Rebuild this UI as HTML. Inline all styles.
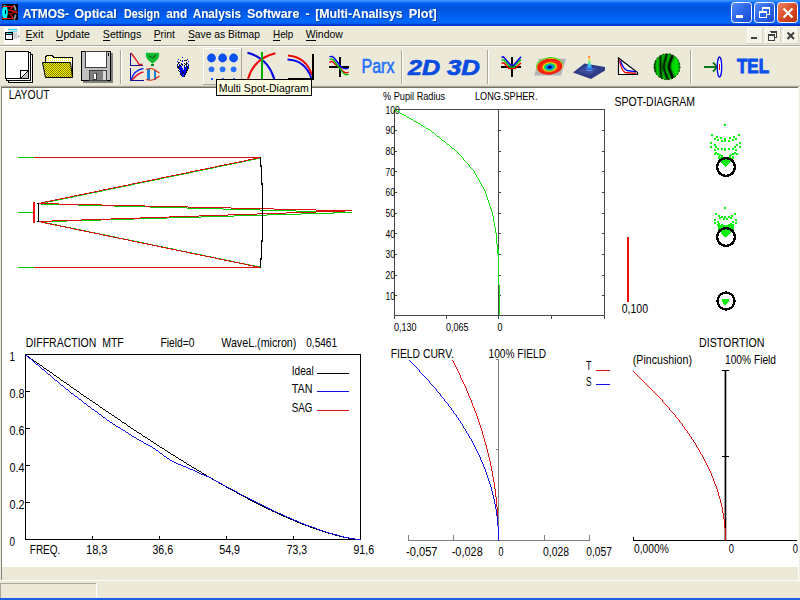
<!DOCTYPE html>
<html><head><meta charset="utf-8"><title>ATMOS- Optical Design and Analysis Software - [Multi-Analisys Plot]</title>
<style>
html,body{margin:0;padding:0;background:#ECE9D8;overflow:hidden}
svg{display:block;font-family:"Liberation Sans",Arial,sans-serif}
text{white-space:pre}
.c{shape-rendering:crispEdges}
</style></head><body>
<svg width="800" height="600" viewBox="0 0 800 600">
<defs>
<linearGradient id="tb" x1="0" y1="0" x2="0" y2="1">
<stop offset="0" stop-color="#3F96FF"/><stop offset="0.06" stop-color="#2D83FA"/><stop offset="0.10" stop-color="#0869F7"/>
<stop offset="0.15" stop-color="#005FF0"/><stop offset="0.22" stop-color="#0056E4"/><stop offset="0.40" stop-color="#0055E2"/>
<stop offset="0.55" stop-color="#005BEC"/><stop offset="0.70" stop-color="#0064F8"/><stop offset="0.86" stop-color="#0068FE"/>
<stop offset="0.91" stop-color="#0058E8"/><stop offset="0.95" stop-color="#0038D0"/><stop offset="1" stop-color="#002FC2"/>
</linearGradient>
<linearGradient id="bb" x1="0" y1="0" x2="1" y2="1"><stop offset="0" stop-color="#5A8EFA"/><stop offset="0.45" stop-color="#2E68EC"/><stop offset="1" stop-color="#1A48CC"/></linearGradient>
<linearGradient id="rb" x1="0" y1="0" x2="1" y2="1"><stop offset="0" stop-color="#EC8A6E"/><stop offset="0.5" stop-color="#DA4B25"/><stop offset="1" stop-color="#B93411"/></linearGradient>
<pattern id="dy" width="2" height="2" patternUnits="userSpaceOnUse"><rect width="2" height="2" fill="#FFFF00"/><rect width="1" height="1" fill="#808000"/><rect x="1" y="1" width="1" height="1" fill="#808000"/></pattern>
<pattern id="ly" width="2" height="2" patternUnits="userSpaceOnUse"><rect width="2" height="2" fill="#FFFFFF"/><rect width="1" height="1" fill="#FFFF00"/></pattern>
<radialGradient id="wf" cx="0.5" cy="0.55" r="0.5" fx="0.5" fy="0.58"><stop offset="0" stop-color="#000010"/><stop offset="0.12" stop-color="#0010B0"/><stop offset="0.26" stop-color="#00A0F0"/><stop offset="0.38" stop-color="#10D840"/><stop offset="0.48" stop-color="#E8E010"/><stop offset="0.58" stop-color="#FF3808"/><stop offset="0.88" stop-color="#F01410"/><stop offset="0.95" stop-color="#E8C818"/><stop offset="1" stop-color="#30D830"/></radialGradient>
<linearGradient id="pk" x1="0" y1="0" x2="0" y2="1"><stop offset="0" stop-color="#FF5040"/><stop offset="0.2" stop-color="#FFE040"/><stop offset="0.45" stop-color="#60F080"/><stop offset="0.7" stop-color="#40C0FF"/><stop offset="1" stop-color="#3050D0"/></linearGradient>
<filter id="ts" x="-2%" y="-20%" width="104%" height="150%"><feDropShadow dx="1" dy="0.8" stdDeviation="0" flood-color="#0A1F6C" flood-opacity="0.55"/></filter><clipPath id="ifc"><circle cx="667" cy="66.7" r="12.8"/></clipPath><filter id="bl" x="-20%" y="-20%" width="140%" height="140%"><feGaussianBlur stdDeviation="0.8"/></filter>
</defs>

<rect width="800" height="600" fill="#ECE9D8"/>
<rect class="c" x="0" y="0" width="800" height="26" fill="url(#tb)"/>
<rect class="c" x="0" y="26" width="800" height="1" fill="#F8F2DE"/>
<g><rect class="c" x="2" y="4" width="16" height="16" fill="#000"/><ellipse cx="4.9" cy="12.3" rx="2.9" ry="7.2" fill="#00F4F8"/><rect class="c" x="5" y="10" width="1" height="4" fill="#000"/><path d="M2.2 6.5H13L10.5 8.8M8.3 13.8H13M10.5 15L12.5 17M2.2 18.5H12.5V17" stroke="#F01010" stroke-width="1.1" fill="none"/><path d="M8.3 10L12 10.8L15 12L17.8 12.5" stroke="#F01010" stroke-width="1.5" fill="none"/><path d="M13.8 5.2Q15.6 8 15.6 10.5M15.6 14.5Q15.6 17 13.8 19.6" stroke="#9A9A9A" stroke-width="1.8" fill="none"/></g>
<text y="17.5" font-size="13" font-weight="bold" fill="#fff" filter="url(#ts)"><tspan x="22.75" textLength="46.25" lengthAdjust="spacingAndGlyphs">ATMOS-</tspan> <tspan x="74.2" textLength="42.6" lengthAdjust="spacingAndGlyphs">Optical</tspan> <tspan x="124" textLength="35.7" lengthAdjust="spacingAndGlyphs">Design</tspan> <tspan x="166.3" textLength="20.7" lengthAdjust="spacingAndGlyphs">and</tspan> <tspan x="192.7" textLength="48.3" lengthAdjust="spacingAndGlyphs">Analysis</tspan> <tspan x="247" textLength="52.3" lengthAdjust="spacingAndGlyphs">Software</tspan> <tspan x="305.6" textLength="4.15" lengthAdjust="spacingAndGlyphs">-</tspan> <tspan x="315.25" textLength="87.45" lengthAdjust="spacingAndGlyphs">[Multi-Analisys</tspan> <tspan x="408.75" textLength="28.05" lengthAdjust="spacingAndGlyphs">Plot]</tspan></text>
<rect x="731.5" y="2.5" width="20" height="20" rx="3" ry="3" fill="url(#bb)" stroke="#fff" stroke-width="1"/>
<rect x="754.5" y="2.5" width="20" height="20" rx="3" ry="3" fill="url(#bb)" stroke="#fff" stroke-width="1"/>
<rect x="777.5" y="2.5" width="20" height="20" rx="3" ry="3" fill="url(#rb)" stroke="#fff" stroke-width="1"/>
<rect class="c" x="736" y="15" width="7" height="3" fill="#fff"/>
<g class="c" fill="#fff"><rect x="762" y="7" width="8" height="2"/><rect x="769" y="7" width="1" height="8"/><rect x="762" y="7" width="1" height="4"/><rect x="767" y="14" width="3" height="1"/><rect x="759" y="11" width="8" height="2"/><rect x="759" y="11" width="1" height="7"/><rect x="766" y="11" width="1" height="7"/><rect x="759" y="17" width="8" height="1"/></g>
<path d="M783.5 8.5L792.5 17.5M792.5 8.5L783.5 17.5" stroke="#fff" stroke-width="2.2" fill="none"/>
<rect class="c" x="0" y="45" width="800" height="1" fill="#ACA899"/><rect class="c" x="0" y="46" width="800" height="1" fill="#fff"/>
<rect class="c" x="4" y="27" width="16" height="17" fill="#fff"/>
<g class="c"><rect x="8" y="28" width="10" height="10" fill="#E4E6EA"/><rect x="8" y="29" width="9" height="1" fill="#30E0F0"/><rect x="10" y="31" width="7" height="1" fill="#60E8F4"/><rect x="13" y="33" width="4" height="6" fill="#D0D2D6"/><rect x="5.5" y="32.5" width="7" height="7" fill="#fff" stroke="#000"/><rect x="5" y="32" width="8" height="1" fill="#000"/><rect x="6" y="33" width="6" height="1" fill="#30D8F0"/><rect x="6" y="34" width="6" height="1" fill="#000"/><path d="M18 35L20 36.5L18 38Z" fill="#A0A0A0" shape-rendering="auto"/></g>
<text x="25.4" y="38" font-size="11" fill="#000" textLength="18.0" lengthAdjust="spacingAndGlyphs" >Exit</text>
<text x="55.8" y="38" font-size="11" fill="#000" textLength="34.2" lengthAdjust="spacingAndGlyphs" >Update</text>
<text x="102.8" y="38" font-size="11" fill="#000" textLength="38.5" lengthAdjust="spacingAndGlyphs" >Settings</text>
<text x="153.7" y="38" font-size="11" fill="#000" textLength="21.3" lengthAdjust="spacingAndGlyphs" >Print</text>
<text x="188" y="38" font-size="11" fill="#000" textLength="72" lengthAdjust="spacingAndGlyphs" >Save as Bitmap</text>
<text x="273" y="38" font-size="11" fill="#000" textLength="20.3" lengthAdjust="spacingAndGlyphs" >Help</text>
<text x="305.7" y="38" font-size="11" fill="#000" textLength="37.1" lengthAdjust="spacingAndGlyphs" >Window</text>
<rect class="c" x="25.5" y="40" width="6" height="1" fill="#000"/>
<rect class="c" x="56" y="40" width="7" height="1" fill="#000"/>
<rect class="c" x="103" y="40" width="6.5" height="1" fill="#000"/>
<rect class="c" x="154" y="40" width="6.5" height="1" fill="#000"/>
<rect class="c" x="188" y="40" width="6.5" height="1" fill="#000"/>
<rect class="c" x="273" y="40" width="7" height="1" fill="#000"/>
<rect class="c" x="306" y="40" width="10" height="1" fill="#000"/>
<rect class="c" x="747" y="28" width="16" height="16" fill="#F4F3EA"/><rect class="c" x="747" y="28" width="16" height="1" fill="#fff"/><rect class="c" x="747" y="28" width="1" height="16" fill="#fff"/><rect class="c" x="762" y="28" width="1" height="16" fill="#D8D4C4"/><rect class="c" x="747" y="43" width="16" height="1" fill="#D8D4C4"/>
<rect class="c" x="765" y="28" width="16" height="16" fill="#F4F3EA"/><rect class="c" x="765" y="28" width="16" height="1" fill="#fff"/><rect class="c" x="765" y="28" width="1" height="16" fill="#fff"/><rect class="c" x="780" y="28" width="1" height="16" fill="#D8D4C4"/><rect class="c" x="765" y="43" width="16" height="1" fill="#D8D4C4"/>
<rect class="c" x="783" y="28" width="16" height="16" fill="#F4F3EA"/><rect class="c" x="783" y="28" width="16" height="1" fill="#fff"/><rect class="c" x="783" y="28" width="1" height="16" fill="#fff"/><rect class="c" x="798" y="28" width="1" height="16" fill="#D8D4C4"/><rect class="c" x="783" y="43" width="16" height="1" fill="#D8D4C4"/>
<rect class="c" x="751" y="37" width="6" height="2" fill="#404040"/>
<g class="c" fill="none" stroke="#404040"><path d="M770.5 32.5H776.5V37.5H775" /><path d="M770 31.5H777"/><rect x="768.5" y="35.5" width="6" height="5"/><path d="M768 34.5H775"/></g>
<path d="M787.5 32.5L794 39M794 32.5L787.5 39" stroke="#404040" stroke-width="2" fill="none"/>
<rect class="c" x="120" y="50" width="1" height="34" fill="#ACA899"/><rect class="c" x="121" y="50" width="1" height="34" fill="#fff"/>
<rect class="c" x="401" y="50" width="1" height="34" fill="#ACA899"/><rect class="c" x="402" y="50" width="1" height="34" fill="#fff"/>
<rect class="c" x="487" y="50" width="1" height="34" fill="#ACA899"/><rect class="c" x="488" y="50" width="1" height="34" fill="#fff"/>
<rect class="c" x="690" y="50" width="1" height="34" fill="#ACA899"/><rect class="c" x="691" y="50" width="1" height="34" fill="#fff"/>
<rect class="c" x="0" y="85" width="800" height="2" fill="#E0DCCB"/>
<g class="c"><rect x="8.5" y="54.5" width="24" height="28" fill="#fff" stroke="#000"/><rect x="6.5" y="52.5" width="24" height="28" fill="#fff" stroke="#000"/><rect x="5.5" y="51.5" width="23" height="27" fill="#fff" stroke="#000"/><path d="M20.5 78V70.5H28" fill="none" stroke="#000"/><path d="M28 71V78H21Z" fill="#C0C0C0" shape-rendering="auto"/><path d="M21 78L28 71" stroke="#000" shape-rendering="auto"/></g>
<g class="c"><path d="M45.5 62V57L47 55.5H52L53.5 57H72.5V77" fill="url(#ly)" stroke="#000"/><path d="M42.5 62.5H70.5L72.5 77.5H45.5Z" fill="url(#dy)" stroke="#000" shape-rendering="auto"/></g>
<g class="c"><rect x="83" y="53" width="30" height="30" fill="#808080"/><rect x="81.5" y="51.5" width="29" height="29" fill="#C0C0C0" stroke="#000"/><rect x="86" y="52" width="20" height="15" fill="#fff"/><rect x="85.5" y="51.5" width="21" height="16" fill="none" stroke="#404040"/><rect x="90" y="71" width="13" height="10" fill="#808080"/><rect x="89.5" y="70.5" width="17" height="10" fill="none" stroke="#404040"/><rect x="93" y="73" width="3" height="6" fill="#fff" stroke="#000" stroke-width="0.6"/><rect x="103" y="71" width="3" height="9" fill="#D8D8D8"/><rect x="107.5" y="53" width="1" height="3" fill="#000"/></g>
<g fill="none" stroke-width="1.3"><path class="c" d="M130.5 53V65.5H143" stroke="#1010A0"/><path d="M131 53L137 61L139 64.5H142.5" stroke="#E01010"/><path class="c" d="M130.5 68V80.5H144" stroke="#1010A0"/><path d="M131 80Q134 70 143.5 68.5" stroke="#1030F0" stroke-width="1.5"/><path d="M132 80Q138 73 143.5 72" stroke="#E01030" stroke-width="1.5"/><path d="M146.5 53.5H158.5Q158.8 58 155.5 60.5L152.5 63L149.5 60.5Q146.2 58 146.5 53.5Z" fill="#10B830" stroke="#10C030"/><path d="M149 56L153 58L156 55" stroke="#087020"/><rect class="c" x="151" y="64" width="3" height="2" fill="#108020" stroke="none"/><rect class="c" x="146.5" y="69" width="3.5" height="11" fill="#1880D8" stroke="none"/><rect class="c" x="153.5" y="69.5" width="2.2" height="10" fill="#1880D8" stroke="none"/><path d="M146 69.5Q150 67.5 154 69.5Q158 72 159.5 73M146 79.5Q150 81 154 79.5Q158 77 159.5 76" stroke="#E03010" stroke-width="1.1"/></g>
<g class="c"><rect x="182" y="57" width="1" height="1" fill="#0000F8"/><rect x="178" y="59" width="1" height="1" fill="#0000F8"/><rect x="187" y="59" width="1" height="1" fill="#0000F8"/><rect x="180" y="60" width="1" height="1" fill="#101018"/><rect x="182" y="60" width="1" height="1" fill="#0000F8"/><rect x="184" y="60" width="1" height="1" fill="#101018"/><rect x="185" y="60" width="1" height="1" fill="#101018"/><rect x="186" y="60" width="1" height="1" fill="#101018"/><rect x="177" y="61" width="1" height="1" fill="#0000F8"/><rect x="182" y="61" width="1" height="1" fill="#0000F8"/><rect x="188" y="61" width="1" height="1" fill="#0000F8"/><rect x="178" y="62" width="1" height="1" fill="#101018"/><rect x="179" y="62" width="1" height="1" fill="#101018"/><rect x="186" y="62" width="1" height="1" fill="#101018"/><rect x="178" y="63" width="1" height="1" fill="#101018"/><rect x="181" y="63" width="1" height="1" fill="#0000F8"/><rect x="184" y="63" width="1" height="1" fill="#101018"/><rect x="186" y="63" width="1" height="1" fill="#101018"/><rect x="187" y="63" width="1" height="1" fill="#0000F8"/><rect x="177" y="64" width="1" height="1" fill="#101018"/><rect x="179" y="64" width="1" height="1" fill="#0000F8"/><rect x="181" y="64" width="1" height="1" fill="#101018"/><rect x="182" y="64" width="1" height="1" fill="#101018"/><rect x="185" y="64" width="1" height="1" fill="#101018"/><rect x="186" y="64" width="1" height="1" fill="#101018"/><rect x="188" y="64" width="1" height="1" fill="#0000F8"/><rect x="177" y="65" width="1" height="1" fill="#0000F8"/><rect x="179" y="65" width="1" height="1" fill="#101018"/><rect x="180" y="65" width="1" height="1" fill="#101018"/><rect x="182" y="65" width="1" height="1" fill="#0000F8"/><rect x="184" y="65" width="1" height="1" fill="#101018"/><rect x="186" y="65" width="1" height="1" fill="#0000F8"/><rect x="188" y="65" width="1" height="1" fill="#101018"/><rect x="177" y="66" width="1" height="1" fill="#0000F8"/><rect x="178" y="66" width="1" height="1" fill="#101018"/><rect x="179" y="66" width="1" height="1" fill="#101018"/><rect x="180" y="66" width="1" height="1" fill="#0000F8"/><rect x="181" y="66" width="1" height="1" fill="#0000F8"/><rect x="184" y="66" width="1" height="1" fill="#0000F8"/><rect x="186" y="66" width="1" height="1" fill="#101018"/><rect x="187" y="66" width="1" height="1" fill="#101018"/><rect x="188" y="66" width="1" height="1" fill="#0000F8"/><rect x="177" y="67" width="1" height="1" fill="#101018"/><rect x="178" y="67" width="1" height="1" fill="#101018"/><rect x="179" y="67" width="1" height="1" fill="#0000F8"/><rect x="180" y="67" width="1" height="1" fill="#0000F8"/><rect x="181" y="67" width="1" height="1" fill="#0000F8"/><rect x="184" y="67" width="1" height="1" fill="#0000F8"/><rect x="185" y="67" width="1" height="1" fill="#0000F8"/><rect x="186" y="67" width="1" height="1" fill="#0000F8"/><rect x="187" y="67" width="1" height="1" fill="#101018"/><rect x="188" y="67" width="1" height="1" fill="#0000F8"/><rect x="178" y="68" width="1" height="1" fill="#101018"/><rect x="179" y="68" width="1" height="1" fill="#0000F8"/><rect x="180" y="68" width="1" height="1" fill="#0000F8"/><rect x="181" y="68" width="1" height="1" fill="#0000F8"/><rect x="182" y="68" width="1" height="1" fill="#0000F8"/><rect x="184" y="68" width="1" height="1" fill="#0000F8"/><rect x="185" y="68" width="1" height="1" fill="#0000F8"/><rect x="186" y="68" width="1" height="1" fill="#0000F8"/><rect x="187" y="68" width="1" height="1" fill="#101018"/><rect x="188" y="68" width="1" height="1" fill="#101018"/><rect x="179" y="69" width="1" height="1" fill="#0000F8"/><rect x="180" y="69" width="1" height="1" fill="#0000F8"/><rect x="181" y="69" width="1" height="1" fill="#0000F8"/><rect x="182" y="69" width="1" height="1" fill="#0000F8"/><rect x="184" y="69" width="1" height="1" fill="#0000F8"/><rect x="185" y="69" width="1" height="1" fill="#0000F8"/><rect x="186" y="69" width="1" height="1" fill="#0000F8"/><rect x="187" y="69" width="1" height="1" fill="#101018"/><rect x="178" y="70" width="1" height="1" fill="#101018"/><rect x="180" y="70" width="1" height="1" fill="#0000F8"/><rect x="181" y="70" width="1" height="1" fill="#101018"/><rect x="182" y="70" width="1" height="1" fill="#0000F8"/><rect x="183" y="70" width="1" height="1" fill="#0000F8"/><rect x="184" y="70" width="1" height="1" fill="#0000F8"/><rect x="185" y="70" width="1" height="1" fill="#0000F8"/><rect x="186" y="70" width="1" height="1" fill="#101018"/><rect x="187" y="70" width="1" height="1" fill="#101018"/><rect x="179" y="71" width="1" height="1" fill="#101018"/><rect x="180" y="71" width="1" height="1" fill="#0000F8"/><rect x="181" y="71" width="1" height="1" fill="#0000F8"/><rect x="182" y="71" width="1" height="1" fill="#0000F8"/><rect x="183" y="71" width="1" height="1" fill="#0000F8"/><rect x="184" y="71" width="1" height="1" fill="#0000F8"/><rect x="185" y="71" width="1" height="1" fill="#0000F8"/><rect x="186" y="71" width="1" height="1" fill="#101018"/><rect x="180" y="72" width="1" height="1" fill="#0000F8"/><rect x="181" y="72" width="1" height="1" fill="#0000F8"/><rect x="182" y="72" width="1" height="1" fill="#101018"/><rect x="183" y="72" width="1" height="1" fill="#101018"/><rect x="184" y="72" width="1" height="1" fill="#0000F8"/><rect x="185" y="72" width="1" height="1" fill="#0000F8"/><rect x="186" y="72" width="1" height="1" fill="#101018"/><rect x="180" y="73" width="1" height="1" fill="#101018"/><rect x="181" y="73" width="1" height="1" fill="#0000F8"/><rect x="182" y="73" width="1" height="1" fill="#0000F8"/><rect x="183" y="73" width="1" height="1" fill="#0000F8"/><rect x="184" y="73" width="1" height="1" fill="#0000F8"/><rect x="185" y="73" width="1" height="1" fill="#101018"/><rect x="180" y="74" width="1" height="1" fill="#101018"/><rect x="181" y="74" width="1" height="1" fill="#0000F8"/><rect x="182" y="74" width="1" height="1" fill="#0000F8"/><rect x="183" y="74" width="1" height="1" fill="#0000F8"/><rect x="184" y="74" width="1" height="1" fill="#0000F8"/><rect x="185" y="74" width="1" height="1" fill="#101018"/><rect x="181" y="75" width="1" height="1" fill="#101018"/><rect x="182" y="75" width="1" height="1" fill="#0000F8"/><rect x="183" y="75" width="1" height="1" fill="#0000F8"/><rect x="184" y="75" width="1" height="1" fill="#101018"/><rect x="182" y="76" width="1" height="1" fill="#0000F8"/><rect x="183" y="76" width="1" height="1" fill="#0000F8"/><rect x="184" y="76" width="1" height="1" fill="#101018"/></g>
<g class="c"><rect x="203" y="48" width="1" height="37" fill="#fff"/><rect x="203" y="48" width="38" height="1" fill="#fff"/><rect x="241" y="48" width="1" height="37" fill="#ACA899"/><rect x="203" y="84" width="39" height="1" fill="#ACA899"/></g>
<circle cx="211.5" cy="58" r="4.4" fill="#0A50F0"/><circle cx="211.5" cy="69.3" r="2.9" fill="#2A70FF"/><rect class="c" x="211" y="78" width="2" height="2" fill="#1860FF"/>
<circle cx="222.6" cy="58" r="4.4" fill="#0A50F0"/><circle cx="222.6" cy="69.3" r="2.9" fill="#2A70FF"/><rect class="c" x="222" y="78" width="2" height="2" fill="#1860FF"/>
<circle cx="233.6" cy="58" r="4.4" fill="#0A50F0"/><circle cx="233.6" cy="69.3" r="2.9" fill="#2A70FF"/><rect class="c" x="233" y="78" width="2" height="2" fill="#1860FF"/>
<g fill="none" stroke-width="2"><path d="M247.5 52.8Q268 58 274.3 79" stroke="#0000E0"/><path d="M275.4 53.2Q254 58 248 79" stroke="#F00000"/><path class="c" d="M262 52V80" stroke="#00B000"/></g>
<g fill="none" stroke-width="1.8"><path d="M288 55.5Q306 57 312 75" stroke="#F00000"/><path d="M287.5 59.5Q305 60 311.5 78.5" stroke="#0000F0"/><path class="c" d="M313 54V80.4M288 79.4H314" stroke="#000" stroke-width="2"/></g>
<g fill="none"><path class="c" d="M340 57V77M329 67H349" stroke="#000" stroke-width="2"/><path d="M329.5 62.5Q332 60 335 64L340 68Q345 75 348.5 72" stroke="#F00000" stroke-width="1.4"/><path d="M329.5 59.5Q332 57.5 335 62L341 70Q345 76.5 348.5 74" stroke="#00C000" stroke-width="1.4"/><path d="M329.5 57Q332 55 335 59L341 67Q345 70 348.5 68" stroke="#0000F0" stroke-width="1.4"/></g>
<text x="361.5" y="72.8" font-size="19.5" fill="#2070FF" stroke="#2070FF" stroke-width="0.5" textLength="33" lengthAdjust="spacingAndGlyphs">Parx</text>
<text x="408" y="74.9" font-size="21.5" font-weight="bold" font-style="italic" fill="#0A4CE0" stroke="#0A4CE0" stroke-width="0.7" textLength="32" lengthAdjust="spacingAndGlyphs">2D</text>
<text x="447" y="74.9" font-size="21.5" font-weight="bold" font-style="italic" fill="#0A4CE0" stroke="#0A4CE0" stroke-width="0.7" textLength="33" lengthAdjust="spacingAndGlyphs">3D</text>
<g fill="none"><path class="c" d="M512 57V77M501 67H521" stroke="#000" stroke-width="2"/><path d="M501.5 63H504L509 68.5H515L521 63" stroke="#F00000" stroke-width="1.5"/><path d="M501.5 60H504L510 67H514L521 59.5" stroke="#00C000" stroke-width="1.5"/><path d="M501.5 57.5L503.5 56.8L511 65.5H513.5L521 56.8" stroke="#0000F0" stroke-width="1.5"/></g>
<path d="M539 58.8H566L561 75.4H534.2Z" fill="#B4B4B8"/><ellipse cx="549.6" cy="65.9" rx="13.6" ry="8.8" fill="url(#wf)" transform="rotate(-6 549.6 65.9)"/>
<path d="M573 72.5L584.5 63.5L605 67V70.5L591 79Z" fill="#2F3C86"/><path d="M578 71L586 66L598 69L590 75Z" fill="#4A58A8" opacity="0.6"/><ellipse cx="589.4" cy="69.5" rx="3.2" ry="1.8" fill="#6AA0FF" opacity="0.85"/><path d="M588.3 56H590L590.6 64Q591.5 68 594 70H585Q587.5 68 588 64Z" fill="url(#pk)"/>
<g fill="none"><path d="M618.5 58V74.5H637.5V72.5Z" fill="#fff" stroke="#000" stroke-width="1.2"/><path d="M619.5 59.5Q621 70 625 72.5L636 73.5" stroke="#F00000" stroke-width="1.3"/><path d="M620.5 61Q623 68.5 627 70.5L636 71.8" stroke="#0000F0" stroke-width="1.3"/></g>
<circle cx="667" cy="66.7" r="13" fill="#00DC00"/><g clip-path="url(#ifc)" fill="none" stroke="#000800"><g filter="url(#bl)"><path d="M661 52Q659.3 66 661.6 81" stroke-width="2"/><path d="M666.8 52C666.6 58 663.8 62 663.8 67S667 75 668 81" stroke-width="2.3"/><path d="M672.8 53C672.4 59 668.9 62 668.9 66.5S672.4 74 673.2 80" stroke-width="3"/><path d="M679.8 56Q681.5 66 679.8 77" stroke-width="1.6"/><path d="M655.2 58Q653.6 66 655.2 75" stroke-width="1.8"/></g><g opacity="0.8"><path d="M661 52Q659.3 66 661.6 81" stroke-width="1.0"/><path d="M666.8 52C666.6 58 663.8 62 663.8 67S667 75 668 81" stroke-width="1.2"/><path d="M672.8 53C672.4 59 668.9 62 668.9 66.5S672.4 74 673.2 80" stroke-width="1.8"/><path d="M679.8 56Q681.5 66 679.8 77" stroke-width="0.8"/><path d="M655.2 58Q653.6 66 655.2 75" stroke-width="0.8"/></g></g><circle cx="667" cy="66.7" r="13" fill="none" stroke="#082008" stroke-width="0.9" stroke-dasharray="2 1.5"/>
<g fill="none"><path class="c" d="M704 67H717" stroke="#0A7A1A" stroke-width="2"/><path d="M713 62.5L717.5 67L713 71.5" stroke="#0A7A1A" stroke-width="1.8"/><ellipse cx="719.5" cy="67" rx="2.2" ry="10" fill="#F4F4F4" stroke="#0000F0" stroke-width="1.3"/><path class="c" d="M719.5 64V70" stroke="#F00000" stroke-width="1"/></g>
<text x="737" y="72.8" font-size="19.5" font-weight="bold" fill="#0A50F0" stroke="#0A50F0" stroke-width="1" textLength="32" lengthAdjust="spacingAndGlyphs">TEL</text>
<g class="c"><rect x="1" y="87" width="797" height="480" fill="#fff"/><rect x="1" y="86" width="798" height="1" fill="#ACA899"/><rect x="1" y="87" width="797" height="1" fill="#716F64"/><rect x="1" y="87" width="1" height="493" fill="#808080"/><rect x="798" y="87" width="1" height="493" fill="#FBFAF4"/><rect x="799" y="87" width="1" height="493" fill="#F2F0E6"/>
<rect x="0" y="580" width="800" height="1" fill="#fff"/>
<rect x="0" y="583" width="97" height="1" fill="#ACA899"/><rect x="0" y="583" width="1" height="15" fill="#ACA899"/><rect x="96" y="583" width="1" height="15" fill="#fff"/><rect x="0" y="598" width="800" height="2" fill="#1C5FE0"/></g>
<rect class="c" x="216.5" y="79.5" width="95" height="16" fill="#FFFFE1" stroke="#000"/>
<text x="218.75" y="91.8" font-size="11" fill="#000" textLength="90.0" lengthAdjust="spacingAndGlyphs" >Multi Spot-Diagram</text>
<text x="8.7" y="99.3" font-size="12.5" fill="#000" textLength="40.8" lengthAdjust="spacingAndGlyphs" >LAYOUT</text>
<g class="c" fill="none" stroke-width="1">
<path d="M18 157.5H34M18 267.5H34M18 212.5H33" stroke="#00CC00"/>
<path class="c" d="M256 158h5v1h-5zM251 159h5v1h-5zM246 160h5v1h-5zM242 161h4v1h-4zM237 162h5v1h-5zM232 163h5v1h-5zM227 164h5v1h-5zM222 165h5v1h-5zM217 166h5v1h-5zM213 167h4v1h-4zM208 168h5v1h-5zM203 169h5v1h-5zM198 170h5v1h-5zM193 171h5v1h-5zM189 172h4v1h-4zM184 173h5v1h-5zM179 174h5v1h-5zM174 175h5v1h-5zM169 176h5v1h-5zM164 177h5v1h-5zM160 178h4v1h-4zM155 179h5v1h-5zM150 180h5v1h-5zM145 181h5v1h-5zM140 182h5v1h-5zM135 183h5v1h-5zM131 184h4v1h-4zM126 185h5v1h-5zM121 186h5v1h-5zM116 187h5v1h-5zM111 188h5v1h-5zM106 189h5v1h-5zM102 190h4v1h-4zM97 191h5v1h-5zM92 192h5v1h-5zM87 193h5v1h-5zM82 194h5v1h-5zM77 195h5v1h-5zM73 196h4v1h-4zM68 197h5v1h-5zM63 198h5v1h-5zM58 199h5v1h-5zM53 200h5v1h-5zM48 201h5v1h-5zM44 202h4v1h-4zM39 203h5v1h-5zM38 204h1v1h-1z" fill="#00CC00"/>
<path class="c" d="M38 221h4v1h-4zM42 222h5v1h-5zM47 223h5v1h-5zM52 224h5v1h-5zM57 225h4v1h-4zM61 226h5v1h-5zM66 227h5v1h-5zM71 228h5v1h-5zM76 229h5v1h-5zM81 230h5v1h-5zM86 231h4v1h-4zM90 232h5v1h-5zM95 233h5v1h-5zM100 234h5v1h-5zM105 235h5v1h-5zM110 236h5v1h-5zM115 237h4v1h-4zM119 238h5v1h-5zM124 239h5v1h-5zM129 240h5v1h-5zM134 241h5v1h-5zM139 242h5v1h-5zM144 243h4v1h-4zM148 244h5v1h-5zM153 245h5v1h-5zM158 246h5v1h-5zM163 247h5v1h-5zM168 248h5v1h-5zM173 249h4v1h-4zM177 250h5v1h-5zM182 251h5v1h-5zM187 252h5v1h-5zM192 253h5v1h-5zM197 254h5v1h-5zM202 255h4v1h-4zM206 256h5v1h-5zM211 257h5v1h-5zM216 258h5v1h-5zM221 259h5v1h-5zM226 260h5v1h-5zM231 261h4v1h-4zM235 262h5v1h-5zM240 263h5v1h-5zM245 264h5v1h-5zM250 265h5v1h-5zM255 266h5v1h-5zM260 267h1v1h-1z" fill="#00CC00"/>
<path class="c" d="M38 203h3v1h-3zM41 204h37v1h-37zM78 205h36v1h-36zM114 206h36v1h-36zM150 207h37v1h-37zM187 208h36v1h-36zM223 209h37v1h-37zM260 210h36v1h-36zM296 211h37v1h-37zM333 212h19v1h-19z" fill="#00CC00"/>
<path class="c" d="M334 212h18v1h-18zM301 213h33v1h-33zM267 214h34v1h-34zM234 215h33v1h-33zM201 216h33v1h-33zM167 217h34v1h-34zM134 218h33v1h-33zM101 219h33v1h-33zM67 220h34v1h-34zM38 221h29v1h-29z" fill="#00CC00"/>
<path d="M34 157.5H260M34 267.5H260" stroke="#D81010"/>
<path class="c" d="M258 157h3v1h-3zM253 158h5v1h-5zM248 159h5v1h-5zM244 160h4v1h-4zM239 161h5v1h-5zM234 162h5v1h-5zM229 163h5v1h-5zM224 164h5v1h-5zM219 165h5v1h-5zM215 166h4v1h-4zM210 167h5v1h-5zM205 168h5v1h-5zM200 169h5v1h-5zM195 170h5v1h-5zM190 171h5v1h-5zM186 172h4v1h-4zM181 173h5v1h-5zM176 174h5v1h-5zM171 175h5v1h-5zM166 176h5v1h-5zM161 177h5v1h-5zM157 178h4v1h-4zM152 179h5v1h-5zM147 180h5v1h-5zM142 181h5v1h-5zM137 182h5v1h-5zM132 183h5v1h-5zM128 184h4v1h-4zM123 185h5v1h-5zM118 186h5v1h-5zM113 187h5v1h-5zM108 188h5v1h-5zM103 189h5v1h-5zM99 190h4v1h-4zM94 191h5v1h-5zM89 192h5v1h-5zM84 193h5v1h-5zM79 194h5v1h-5zM74 195h5v1h-5zM70 196h4v1h-4zM65 197h5v1h-5zM60 198h5v1h-5zM55 199h5v1h-5zM50 200h5v1h-5zM45 201h5v1h-5zM41 202h4v1h-4zM38 203h3v1h-3z" fill="#D81010"/>
<path class="c" d="M38 221h3v1h-3zM41 222h4v1h-4zM45 223h5v1h-5zM50 224h5v1h-5zM55 225h5v1h-5zM60 226h5v1h-5zM65 227h5v1h-5zM70 228h4v1h-4zM74 229h5v1h-5zM79 230h5v1h-5zM84 231h5v1h-5zM89 232h5v1h-5zM94 233h5v1h-5zM99 234h4v1h-4zM103 235h5v1h-5zM108 236h5v1h-5zM113 237h5v1h-5zM118 238h5v1h-5zM123 239h5v1h-5zM128 240h4v1h-4zM132 241h5v1h-5zM137 242h5v1h-5zM142 243h5v1h-5zM147 244h5v1h-5zM152 245h5v1h-5zM157 246h4v1h-4zM161 247h5v1h-5zM166 248h5v1h-5zM171 249h5v1h-5zM176 250h5v1h-5zM181 251h5v1h-5zM186 252h4v1h-4zM190 253h5v1h-5zM195 254h5v1h-5zM200 255h5v1h-5zM205 256h5v1h-5zM210 257h5v1h-5zM215 258h4v1h-4zM219 259h5v1h-5zM224 260h5v1h-5zM229 261h5v1h-5zM234 262h5v1h-5zM239 263h5v1h-5zM244 264h4v1h-4zM248 265h5v1h-5zM253 266h5v1h-5zM258 267h3v1h-3z" fill="#D81010"/>
<path class="c" d="M38 203h21v1h-21zM59 204h43v1h-43zM102 205h43v1h-43zM145 206h43v1h-43zM188 207h43v1h-43zM231 208h43v1h-43zM274 209h42v1h-42zM316 210h36v1h-36z" fill="#D81010"/>
<path class="c" d="M345 210h7v1h-7zM316 211h29v1h-29zM286 212h30v1h-30zM257 213h29v1h-29zM228 214h29v1h-29zM199 215h29v1h-29zM169 216h30v1h-30zM140 217h29v1h-29zM111 218h29v1h-29zM81 219h30v1h-30zM52 220h29v1h-29zM38 221h14v1h-14z" fill="#D81010"/>
<rect x="33" y="202" width="2" height="21" fill="#F01010" stroke="none"/>
<path d="M37 203.5H38.5V221.5H37" stroke="#000"/>
<path d="M260.5 157V166H261.5V184H262.5V241H261.5V259H260.5V268" stroke="#000" stroke-width="1.4"/>
</g>
<text x="383" y="99.5" font-size="10.4" fill="#000" textLength="62.2" lengthAdjust="spacingAndGlyphs" >% Pupil Radius</text>
<text x="475" y="99.5" font-size="10.4" fill="#000" textLength="62.5" lengthAdjust="spacingAndGlyphs" >LONG.SPHER.</text>
<g class="c" fill="none" stroke="#484848"><path d="M394.5 109.5H604.5V315.5H394.5Z"/><path d="M498.5 109.5V315.5"/>
<path d="M499 130.5H501M601.5 130.5H604M394.5 130.5H396.5M499 151.5H501M601.5 151.5H604M394.5 151.5H396.5M499 171.5H501M601.5 171.5H604M394.5 171.5H396.5M499 192.5H501M601.5 192.5H604M394.5 192.5H396.5M499 213.5H501M601.5 213.5H604M394.5 213.5H396.5M499 233.5H501M601.5 233.5H604M394.5 233.5H396.5M499 254.5H501M601.5 254.5H604M394.5 254.5H396.5M499 275.5H501M601.5 275.5H604M394.5 275.5H396.5M499 295.5H501M601.5 295.5H604M394.5 295.5H396.5M394.5 315.5V319M446.5 315.5V319M498.5 315.5V319M551.5 315.5V319M604.5 315.5V319"/></g>
<text x="385.6" y="113.7" font-size="10.4" fill="#000" textLength="14.2" lengthAdjust="spacingAndGlyphs" >100</text>
<text x="385.6" y="134.3" font-size="10.4" fill="#000" textLength="9.5" lengthAdjust="spacingAndGlyphs" >90</text>
<text x="385.6" y="155.0" font-size="10.4" fill="#000" textLength="9.5" lengthAdjust="spacingAndGlyphs" >80</text>
<text x="385.6" y="175.6" font-size="10.4" fill="#000" textLength="9.5" lengthAdjust="spacingAndGlyphs" >70</text>
<text x="385.6" y="196.3" font-size="10.4" fill="#000" textLength="9.5" lengthAdjust="spacingAndGlyphs" >60</text>
<text x="385.6" y="216.9" font-size="10.4" fill="#000" textLength="9.5" lengthAdjust="spacingAndGlyphs" >50</text>
<text x="385.6" y="237.6" font-size="10.4" fill="#000" textLength="9.5" lengthAdjust="spacingAndGlyphs" >40</text>
<text x="385.6" y="258.2" font-size="10.4" fill="#000" textLength="9.5" lengthAdjust="spacingAndGlyphs" >30</text>
<text x="385.6" y="278.9" font-size="10.4" fill="#000" textLength="9.5" lengthAdjust="spacingAndGlyphs" >20</text>
<text x="385.6" y="299.6" font-size="10.4" fill="#000" textLength="9.5" lengthAdjust="spacingAndGlyphs" >10</text>
<text x="393.9" y="330.8" font-size="10.4" fill="#000" textLength="22.5" lengthAdjust="spacingAndGlyphs" >0,130</text>
<text x="446" y="330.8" font-size="10.4" fill="#000" textLength="22.5" lengthAdjust="spacingAndGlyphs" >0,065</text>
<text x="497.6" y="330.8" font-size="10.4" fill="#000" textLength="5.0" lengthAdjust="spacingAndGlyphs" >0</text>
<path class="c" d="M394 109v1h1v-1zM395 110v1h1v-1zM396 110v1h1v-1zM397 111v1h1v-1zM398 111v1h1v-1zM399 112v1h1v-1zM400 113v1h1v-1zM401 113v1h1v-1zM402 114v1h1v-1zM403 114v1h1v-1zM404 115v1h1v-1zM405 115v1h1v-1zM406 116v1h1v-1zM407 117v1h1v-1zM408 117v1h1v-1zM409 118v1h1v-1zM410 118v1h1v-1zM411 119v1h1v-1zM412 119v1h1v-1zM413 120v1h1v-1zM414 121v1h1v-1zM415 121v1h1v-1zM416 122v1h1v-1zM417 122v1h1v-1zM418 123v1h1v-1zM419 123v1h1v-1zM420 124v1h1v-1zM421 125v1h1v-1zM422 125v1h1v-1zM423 126v1h1v-1zM424 126v1h1v-1zM425 127v1h1v-1zM426 128v1h1v-1zM427 128v1h1v-1zM428 129v1h1v-1zM429 129v1h1v-1zM430 130v1h1v-1zM431 131v1h1v-1zM432 132v1h1v-1zM433 132v1h1v-1zM434 133v1h1v-1zM435 134v1h1v-1zM436 135v1h1v-1zM437 136v1h1v-1zM438 136v1h1v-1zM439 137v1h1v-1zM440 138v1h1v-1zM441 139v1h1v-1zM442 140v1h1v-1zM443 140v1h1v-1zM444 141v1h1v-1zM445 142v1h1v-1zM446 143v1h1v-1zM447 144v1h1v-1zM448 144v1h1v-1zM449 145v1h1v-1zM450 146v1h1v-1zM451 147v1h1v-1zM452 148v1h1v-1zM453 148v1h1v-1zM454 149v1h1v-1zM455 150v1h1v-1zM456 151v1h1v-1zM457 152v1h1v-1zM458 153v1h1v-1zM459 154v1h1v-1zM460 155v1h1v-1zM461 156v1h1v-1zM462 157v1h1v-1zM463 158v2h1v-2zM464 160v1h1v-1zM465 161v1h1v-1zM466 162v1h1v-1zM467 163v1h1v-1zM468 164v1h1v-1zM469 165v2h1v-2zM470 167v1h1v-1zM471 168v1h1v-1zM472 169v1h1v-1zM473 170v1h1v-1zM474 171v2h1v-2zM475 173v2h1v-2zM476 175v2h1v-2zM477 177v1h1v-1zM478 178v2h1v-2zM479 180v2h1v-2zM480 182v2h1v-2zM481 184v2h1v-2zM482 186v1h1v-1zM483 187v2h1v-2zM484 189v2h1v-2zM485 191v3h1v-3zM486 194v3h1v-3zM487 197v3h1v-3zM488 200v3h1v-3zM489 203v3h1v-3zM490 206v3h1v-3zM491 209v3h1v-3zM492 212v4h1v-4zM493 216v6h1v-6zM494 222v5h1v-5zM495 227v6h1v-6zM496 233v11h1v-11zM497 244v10h1v-10z" fill="#10E010"/>
<path class="c" d="M498.5 249V285M499.5 285V315" fill="none" stroke="#10E010" stroke-width="1"/>
<text x="614.6" y="106" font-size="12.5" fill="#000" textLength="80.4" lengthAdjust="spacingAndGlyphs" >SPOT-DIAGRAM</text>
<rect class="c" x="627" y="237" width="2" height="65" fill="#F01010"/>
<text x="621.7" y="312.5" font-size="12.5" fill="#000" textLength="26.3" lengthAdjust="spacingAndGlyphs" >0,100</text>
<g class="c" fill="#10F010"><rect x="724" y="124" width="2" height="2"/><rect x="711" y="134" width="2" height="2"/><rect x="738" y="134" width="2" height="2"/><rect x="716" y="136" width="2" height="2"/><rect x="733" y="136" width="2" height="2"/><rect x="720" y="137" width="2" height="2"/><rect x="729" y="137" width="2" height="2"/><rect x="714" y="138" width="2" height="2"/><rect x="724" y="138" width="2" height="2"/><rect x="735" y="138" width="2" height="2"/><rect x="717" y="139" width="2" height="2"/><rect x="732" y="139" width="2" height="2"/><rect x="721" y="140" width="2" height="2"/><rect x="724" y="140" width="2" height="2"/><rect x="728" y="140" width="2" height="2"/><rect x="710" y="142" width="2" height="2"/><rect x="739" y="142" width="2" height="2"/><rect x="714" y="144" width="2" height="2"/><rect x="736" y="144" width="2" height="2"/><rect x="710" y="146" width="2" height="2"/><rect x="739" y="146" width="2" height="2"/><rect x="715" y="146" width="2" height="2"/><rect x="734" y="146" width="2" height="2"/><rect x="717" y="148" width="2" height="2"/><rect x="721" y="148" width="2" height="2"/><rect x="724" y="148" width="2" height="2"/><rect x="724" y="149" width="2" height="2"/><rect x="728" y="148" width="2" height="2"/><rect x="732" y="148" width="2" height="2"/><rect x="714" y="149" width="2" height="2"/><rect x="735" y="149" width="2" height="2"/><rect x="715" y="152" width="2" height="2"/><rect x="734" y="152" width="2" height="2"/><rect x="714" y="153" width="2" height="2"/><rect x="736" y="153" width="2" height="2"/><rect x="717" y="153" width="2" height="2"/><rect x="732" y="153" width="2" height="2"/><rect x="719" y="154" width="2" height="2"/><rect x="730" y="154" width="2" height="2"/><rect x="718" y="156" width="2" height="2"/><rect x="721" y="155" width="2" height="2"/><rect x="729" y="155" width="2" height="2"/><rect x="732" y="156" width="2" height="2"/><rect x="720" y="157" width="2" height="2"/><rect x="729" y="157" width="2" height="2"/><rect x="722" y="157" width="2" height="2"/><rect x="728" y="157" width="2" height="2"/></g>
<path d="M716.8 157.5L734.5 157.5L729 164L725.7 167L722.5 164Z" fill="#10F010" class="c"/>
<circle class="c" cx="726" cy="167" r="8.9" fill="none" stroke="#000" stroke-width="2.4"/>
<g class="c" fill="#10F010"><rect x="724" y="207" width="2" height="2"/><rect x="715" y="213" width="2" height="2"/><rect x="734" y="213" width="2" height="2"/><rect x="718" y="215" width="2" height="2"/><rect x="731" y="215" width="2" height="2"/><rect x="721" y="216" width="2" height="2"/><rect x="724" y="216" width="2" height="2"/><rect x="728" y="216" width="2" height="2"/><rect x="719" y="217" width="2" height="2"/><rect x="723" y="218" width="2" height="2"/><rect x="726" y="218" width="2" height="2"/><rect x="730" y="217" width="2" height="2"/><rect x="714" y="219" width="2" height="2"/><rect x="735" y="219" width="2" height="2"/><rect x="717" y="221" width="2" height="2"/><rect x="732" y="221" width="2" height="2"/><rect x="714" y="222" width="2" height="2"/><rect x="735" y="222" width="2" height="2"/><rect x="718" y="223" width="2" height="2"/><rect x="730" y="223" width="2" height="2"/><rect x="717" y="224" width="2" height="2"/><rect x="721" y="224" width="2" height="2"/><rect x="724" y="225" width="2" height="2"/><rect x="728" y="224" width="2" height="2"/><rect x="732" y="224" width="2" height="2"/><rect x="718" y="226" width="2" height="2"/><rect x="731" y="226" width="2" height="2"/></g>
<path d="M717.5 225L734.5 225L734 229L729 235L725.7 237.5L722.5 235L718 229Z" fill="#10F010" class="c"/>
<circle class="c" cx="726" cy="237" r="8.9" fill="none" stroke="#000" stroke-width="2.4"/>
<path d="M722.3 299H728.8L728.8 302L726 304.8H724.5L722.3 302Z" fill="#10F010" class="c"/>
<circle class="c" cx="726" cy="301" r="8.5" fill="none" stroke="#000" stroke-width="2.4"/>
<text x="25.75" y="347" font-size="12.5" fill="#000" textLength="98.0" lengthAdjust="spacingAndGlyphs" >DIFFRACTION  MTF</text>
<text x="160.5" y="347" font-size="12.5" fill="#000" textLength="34.0" lengthAdjust="spacingAndGlyphs" >Field=0</text>
<text x="221.2" y="347" font-size="12.5" fill="#000" textLength="75.2" lengthAdjust="spacingAndGlyphs" >WaveL.(micron)</text>
<text x="306.25" y="347" font-size="12.5" fill="#000" textLength="30.75" lengthAdjust="spacingAndGlyphs" >0,5461</text>
<g class="c" fill="none" stroke="#000"><path d="M25.5 354.5H360.5V539.5H25.5Z"/>
<path d="M25.5 391.5H30M25.5 428.5H30M25.5 465.5H30M25.5 502.5H30M92.5 539.5V535.5M159.5 539.5V535.5M226.5 539.5V535.5M293.5 539.5V535.5"/></g>
<text x="9.5" y="360.5" font-size="12.5" fill="#000" textLength="5.5" lengthAdjust="spacingAndGlyphs" >1</text>
<text x="9.5" y="397.6" font-size="12.5" fill="#000" textLength="15.0" lengthAdjust="spacingAndGlyphs" >0.8</text>
<text x="9.5" y="434.7" font-size="12.5" fill="#000" textLength="15.0" lengthAdjust="spacingAndGlyphs" >0.6</text>
<text x="9.5" y="471.8" font-size="12.5" fill="#000" textLength="15.0" lengthAdjust="spacingAndGlyphs" >0.4</text>
<text x="9.5" y="508.9" font-size="12.5" fill="#000" textLength="15.0" lengthAdjust="spacingAndGlyphs" >0.2</text>
<text x="9.5" y="546.0" font-size="12.5" fill="#000" textLength="5.5" lengthAdjust="spacingAndGlyphs" >0</text>
<text x="29.75" y="554" font-size="12.5" fill="#000" textLength="30.65" lengthAdjust="spacingAndGlyphs" >FREQ.</text>
<text x="86" y="554" font-size="12.5" fill="#000" textLength="21.5" lengthAdjust="spacingAndGlyphs" >18,3</text>
<text x="152.5" y="554" font-size="12.5" fill="#000" textLength="20.5" lengthAdjust="spacingAndGlyphs" >36,6</text>
<text x="219.25" y="554" font-size="12.5" fill="#000" textLength="20.75" lengthAdjust="spacingAndGlyphs" >54,9</text>
<text x="286.75" y="554" font-size="12.5" fill="#000" textLength="20.25" lengthAdjust="spacingAndGlyphs" >73,3</text>
<text x="353.5" y="554" font-size="12.5" fill="#000" textLength="20.5" lengthAdjust="spacingAndGlyphs" >91,6</text>
<path class="c" d="M25 354h1v1h-1zM26 355h1v1h-1zM27 356h2v1h-2zM29 357h1v1h-1zM30 358h1v1h-1zM31 359h2v1h-2zM33 360h1v1h-1zM34 361h2v1h-2zM36 362h1v1h-1zM37 363h2v1h-2zM39 364h1v1h-1zM40 365h2v1h-2zM42 366h1v1h-1zM43 367h1v1h-1zM44 368h2v1h-2zM46 369h1v1h-1zM47 370h2v1h-2zM49 371h1v1h-1zM50 372h2v1h-2zM52 373h1v1h-1zM53 374h1v1h-1zM54 375h2v1h-2zM56 376h1v1h-1zM57 377h2v1h-2zM59 378h1v1h-1zM60 379h1v1h-1zM61 380h2v1h-2zM63 381h1v1h-1zM64 382h2v1h-2zM66 383h1v1h-1zM67 384h2v1h-2zM69 385h1v1h-1zM70 386h1v1h-1zM71 387h2v1h-2zM73 388h1v1h-1zM74 389h2v1h-2zM76 390h1v1h-1zM77 391h2v1h-2zM79 392h1v1h-1zM80 393h1v1h-1zM81 394h2v1h-2zM83 395h1v1h-1zM84 396h2v1h-2zM86 397h1v1h-1zM87 398h2v1h-2zM89 399h1v1h-1zM90 400h2v1h-2zM92 401h1v1h-1zM93 402h2v1h-2zM95 403h1v1h-1zM96 404h2v1h-2zM98 405h1v1h-1zM99 406h1v1h-1zM100 407h2v1h-2zM102 408h1v1h-1zM103 409h2v1h-2zM105 410h1v1h-1zM106 411h2v1h-2zM108 412h1v1h-1zM109 413h2v1h-2zM111 414h1v1h-1zM112 415h2v1h-2zM114 416h1v1h-1zM115 417h2v1h-2zM117 418h1v1h-1zM118 419h2v1h-2zM120 420h1v1h-1zM121 421h1v1h-1zM122 422h2v1h-2zM124 423h2v1h-2zM126 424h1v1h-1zM127 425h1v1h-1zM128 426h2v1h-2zM130 427h1v1h-1zM131 428h2v1h-2zM133 429h1v1h-1zM134 430h2v1h-2zM136 431h1v1h-1zM137 432h2v1h-2zM139 433h2v1h-2zM141 434h1v1h-1zM142 435h1v1h-1zM143 436h2v1h-2zM145 437h2v1h-2zM147 438h1v1h-1zM148 439h2v1h-2zM150 440h1v1h-1zM151 441h2v1h-2zM153 442h1v1h-1zM154 443h2v1h-2zM156 444h1v1h-1zM157 445h2v1h-2zM159 446h1v1h-1zM160 447h2v1h-2zM162 448h2v1h-2zM164 449h1v1h-1zM165 450h2v1h-2zM167 451h1v1h-1zM168 452h2v1h-2zM170 453h1v1h-1zM171 454h2v1h-2zM173 455h2v1h-2zM175 456h1v1h-1zM176 457h2v1h-2zM178 458h1v1h-1zM179 459h2v1h-2zM181 460h2v1h-2zM183 461h1v1h-1zM184 462h2v1h-2zM186 463h1v1h-1zM187 464h2v1h-2zM189 465h2v1h-2zM191 466h1v1h-1zM192 467h2v1h-2zM194 468h2v1h-2zM196 469h1v1h-1zM197 470h2v1h-2zM199 471h2v1h-2zM201 472h1v1h-1zM202 473h2v1h-2zM204 474h2v1h-2zM206 475h1v1h-1zM207 476h2v1h-2zM209 477h2v1h-2zM211 478h1v1h-1zM212 479h2v1h-2zM214 480h2v1h-2zM216 481h2v1h-2zM218 482h1v1h-1zM219 483h2v1h-2zM221 484h2v1h-2zM223 485h2v1h-2zM225 486h1v1h-1zM226 487h2v1h-2zM228 488h2v1h-2zM230 489h2v1h-2zM232 490h2v1h-2zM234 491h2v1h-2zM236 492h1v1h-1zM237 493h2v1h-2zM239 494h2v1h-2zM241 495h2v1h-2zM243 496h2v1h-2zM245 497h2v1h-2zM247 498h1v1h-1zM248 499h2v1h-2zM250 500h2v1h-2zM252 501h2v1h-2zM254 502h2v1h-2zM256 503h2v1h-2zM258 504h2v1h-2zM260 505h2v1h-2zM262 506h2v1h-2zM264 507h2v1h-2zM266 508h2v1h-2zM268 509h3v1h-3zM271 510h1v1h-1zM272 511h3v1h-3zM275 512h2v1h-2zM277 513h2v1h-2zM279 514h2v1h-2zM281 515h2v1h-2zM283 516h3v1h-3zM286 517h2v1h-2zM288 518h2v1h-2zM290 519h3v1h-3zM293 520h2v1h-2zM295 521h2v1h-2zM297 522h3v1h-3zM300 523h2v1h-2zM302 524h3v1h-3zM305 525h3v1h-3zM308 526h2v1h-2zM310 527h3v1h-3zM313 528h3v1h-3zM316 529h3v1h-3zM319 530h3v1h-3zM322 531h3v1h-3zM325 532h3v1h-3zM328 533h4v1h-4zM332 534h3v1h-3zM335 535h4v1h-4zM339 536h4v1h-4zM343 537h5v1h-5zM348 538h6v1h-6zM354 539h7v1h-7z" fill="#000"/>
<path class="c" d="M25 354h1v1h-1zM26 355h1v1h-1zM27 356h1v1h-1zM28 357h1v1h-1zM29 358h2v1h-2zM31 359h1v1h-1zM32 360h1v1h-1zM33 361h1v1h-1zM34 362h1v1h-1zM35 363h1v1h-1zM36 364h2v1h-2zM38 365h1v1h-1zM39 366h1v1h-1zM40 367h1v1h-1zM41 368h1v1h-1zM42 369h2v1h-2zM44 370h1v1h-1zM45 371h1v1h-1zM46 372h1v1h-1zM47 373h1v1h-1zM48 374h2v1h-2zM50 375h1v1h-1zM51 376h1v1h-1zM52 377h1v1h-1zM53 378h1v1h-1zM54 379h1v1h-1zM55 380h2v1h-2zM57 381h1v1h-1zM58 382h1v1h-1zM59 383h1v1h-1zM60 384h1v1h-1zM61 385h2v1h-2zM63 386h1v1h-1zM64 387h1v1h-1zM65 388h1v1h-1zM66 389h2v1h-2zM68 390h1v1h-1zM69 391h1v1h-1zM70 392h1v1h-1zM71 393h2v1h-2zM73 394h1v1h-1zM74 395h1v1h-1zM75 396h2v1h-2zM77 397h1v1h-1zM78 398h1v1h-1zM79 399h2v1h-2zM81 400h1v1h-1zM82 401h1v1h-1zM83 402h1v1h-1zM84 403h2v1h-2zM86 404h1v1h-1zM87 405h1v1h-1zM88 406h2v1h-2zM90 407h1v1h-1zM91 408h1v1h-1zM92 409h2v1h-2zM94 410h1v1h-1zM95 411h2v1h-2zM97 412h1v1h-1zM98 413h1v1h-1zM99 414h2v1h-2zM101 415h1v1h-1zM102 416h1v1h-1zM103 417h2v1h-2zM105 418h1v1h-1zM106 419h1v1h-1zM107 420h2v1h-2zM109 421h1v1h-1zM110 422h2v1h-2zM112 423h1v1h-1zM113 424h2v1h-2zM115 425h1v1h-1zM116 426h2v1h-2zM118 427h2v1h-2zM120 428h1v1h-1zM121 429h2v1h-2zM123 430h2v1h-2zM125 431h1v1h-1zM126 432h2v1h-2zM128 433h1v1h-1zM129 434h2v1h-2zM131 435h1v1h-1zM132 436h2v1h-2zM134 437h2v1h-2zM136 438h1v1h-1zM137 439h2v1h-2zM139 440h2v1h-2zM141 441h2v1h-2zM143 442h1v1h-1zM144 443h2v1h-2zM146 444h2v1h-2zM148 445h2v1h-2zM150 446h2v1h-2zM152 447h1v1h-1zM153 448h2v1h-2zM155 449h1v1h-1zM156 450h2v1h-2zM158 451h1v1h-1zM159 452h1v1h-1zM160 453h2v1h-2zM162 454h1v1h-1zM163 455h1v1h-1zM164 456h2v1h-2zM166 457h1v1h-1zM167 458h2v1h-2zM169 459h1v1h-1zM170 460h2v1h-2zM172 461h2v1h-2zM174 462h2v1h-2zM176 463h2v1h-2zM178 464h3v1h-3zM181 465h2v1h-2zM183 466h3v1h-3zM186 467h2v1h-2zM188 468h2v1h-2zM190 469h3v1h-3zM193 470h2v1h-2zM195 471h2v1h-2zM197 472h2v1h-2zM199 473h2v1h-2zM201 474h3v1h-3zM204 475h2v1h-2zM206 476h3v1h-3zM209 477h2v1h-2zM211 478h2v1h-2zM213 479h1v1h-1zM214 480h2v1h-2zM216 481h2v1h-2zM218 482h2v1h-2zM220 483h2v1h-2zM222 484h1v1h-1zM223 485h2v1h-2zM225 486h2v1h-2zM227 487h2v1h-2zM229 488h2v1h-2zM231 489h2v1h-2zM233 490h2v1h-2zM235 491h2v1h-2zM237 492h1v1h-1zM238 493h2v1h-2zM240 494h2v1h-2zM242 495h2v1h-2zM244 496h2v1h-2zM246 497h2v1h-2zM248 498h2v1h-2zM250 499h2v1h-2zM252 500h2v1h-2zM254 501h2v1h-2zM256 502h2v1h-2zM258 503h2v1h-2zM260 504h2v1h-2zM262 505h2v1h-2zM264 506h2v1h-2zM266 507h2v1h-2zM268 508h2v1h-2zM270 509h2v1h-2zM272 510h2v1h-2zM274 511h2v1h-2zM276 512h2v1h-2zM278 513h3v1h-3zM281 514h2v1h-2zM283 515h2v1h-2zM285 516h2v1h-2zM287 517h3v1h-3zM290 518h2v1h-2zM292 519h2v1h-2zM294 520h3v1h-3zM297 521h2v1h-2zM299 522h2v1h-2zM301 523h3v1h-3zM304 524h2v1h-2zM306 525h3v1h-3zM309 526h3v1h-3zM312 527h3v1h-3zM315 528h2v1h-2zM317 529h3v1h-3zM320 530h3v1h-3zM323 531h3v1h-3zM326 532h3v1h-3zM329 533h4v1h-4zM333 534h4v1h-4zM337 535h3v1h-3zM340 536h4v1h-4zM344 537h5v1h-5zM349 538h6v1h-6zM355 539h6v1h-6z" fill="#1010E8"/>
<text x="291.75" y="375" font-size="12.5" fill="#000" textLength="22.0" lengthAdjust="spacingAndGlyphs" >Ideal</text>
<text x="291.75" y="392.8" font-size="12.5" fill="#000" textLength="20.75" lengthAdjust="spacingAndGlyphs" >TAN</text>
<text x="291.75" y="412" font-size="12.5" fill="#000" textLength="20.75" lengthAdjust="spacingAndGlyphs" >SAG</text>
<g class="c"><rect x="317" y="373" width="32" height="1" fill="#000"/><rect x="317" y="391" width="32" height="1" fill="#1010E8"/><rect x="317" y="410" width="32" height="1" fill="#E01010"/></g>
<text x="390.7" y="358" font-size="12.5" fill="#000" textLength="63.3" lengthAdjust="spacingAndGlyphs" >FIELD CURV.</text>
<text x="488.5" y="358" font-size="12.5" fill="#000" textLength="57.5" lengthAdjust="spacingAndGlyphs" >100% FIELD</text>
<g class="c" fill="none" stroke="#808080"><path d="M498.5 359V540M408.5 540.5H590M408.5 535V541M453.5 535V541M544.5 535V541M589.5 535V541M496 359.5H499M496 449.5H499"/></g>
<path class="c" d="M452 360v1h1v-1zM453 361v2h1v-2zM454 363v2h1v-2zM455 365v2h1v-2zM456 367v2h1v-2zM457 369v2h1v-2zM458 371v2h1v-2zM459 373v2h1v-2zM460 375v3h1v-3zM461 378v2h1v-2zM462 380v2h1v-2zM463 382v2h1v-2zM464 384v2h1v-2zM465 386v2h1v-2zM466 388v3h1v-3zM467 391v2h1v-2zM468 393v3h1v-3zM469 396v2h1v-2zM470 398v2h1v-2zM471 400v3h1v-3zM472 403v3h1v-3zM473 406v2h1v-2zM474 408v3h1v-3zM475 411v2h1v-2zM476 413v3h1v-3zM477 416v3h1v-3zM478 419v3h1v-3zM479 422v3h1v-3zM480 425v3h1v-3zM481 428v3h1v-3zM482 431v4h1v-4zM483 435v3h1v-3zM484 438v4h1v-4zM485 442v3h1v-3zM486 445v4h1v-4zM487 449v4h1v-4zM488 453v4h1v-4zM489 457v4h1v-4zM490 461v5h1v-5zM491 466v5h1v-5zM492 471v6h1v-6zM493 477v5h1v-5zM494 482v7h1v-7zM495 489v8h1v-8zM496 497v10h1v-10zM497 507v11h1v-11z" fill="#E01010"/>
<path class="c" d="M409 360v1h1v-1zM410 361v1h1v-1zM411 362v1h1v-1zM412 363v1h1v-1zM413 364v1h1v-1zM414 365v1h1v-1zM415 366v1h1v-1zM416 367v1h1v-1zM417 368v1h1v-1zM418 369v1h1v-1zM419 370v2h1v-2zM420 372v1h1v-1zM421 373v1h1v-1zM422 374v1h1v-1zM423 375v1h1v-1zM424 376v1h1v-1zM425 377v1h1v-1zM426 378v1h1v-1zM427 379v1h1v-1zM428 380v1h1v-1zM429 381v2h1v-2zM430 383v1h1v-1zM431 384v1h1v-1zM432 385v1h1v-1zM433 386v1h1v-1zM434 387v1h1v-1zM435 388v1h1v-1zM436 389v2h1v-2zM437 391v1h1v-1zM438 392v1h1v-1zM439 393v1h1v-1zM440 394v2h1v-2zM441 396v1h1v-1zM442 397v1h1v-1zM443 398v1h1v-1zM444 399v2h1v-2zM445 401v1h1v-1zM446 402v1h1v-1zM447 403v1h1v-1zM448 404v2h1v-2zM449 406v1h1v-1zM450 407v1h1v-1zM451 408v2h1v-2zM452 410v1h1v-1zM453 411v2h1v-2zM454 413v1h1v-1zM455 414v1h1v-1zM456 415v2h1v-2zM457 417v1h1v-1zM458 418v2h1v-2zM459 420v1h1v-1zM460 421v2h1v-2zM461 423v1h1v-1zM462 424v2h1v-2zM463 426v2h1v-2zM464 428v1h1v-1zM465 429v2h1v-2zM466 431v2h1v-2zM467 433v1h1v-1zM468 434v2h1v-2zM469 436v2h1v-2zM470 438v1h1v-1zM471 439v2h1v-2zM472 441v2h1v-2zM473 443v2h1v-2zM474 445v2h1v-2zM475 447v2h1v-2zM476 449v2h1v-2zM477 451v2h1v-2zM478 453v2h1v-2zM479 455v2h1v-2zM480 457v3h1v-3zM481 460v2h1v-2zM482 462v2h1v-2zM483 464v3h1v-3zM484 467v2h1v-2zM485 469v3h1v-3zM486 472v3h1v-3zM487 475v3h1v-3zM488 478v3h1v-3zM489 481v3h1v-3zM490 484v3h1v-3zM491 487v4h1v-4zM492 491v4h1v-4zM493 495v4h1v-4zM494 499v5h1v-5zM495 504v5h1v-5zM496 509v7h1v-7zM497 516v10h1v-10zM498 526v15h1v-15z" fill="#1010E8"/>
<text x="586" y="370" font-size="12.5" fill="#000" textLength="5.5" lengthAdjust="spacingAndGlyphs" >T</text>
<text x="586" y="386" font-size="12.5" fill="#000" textLength="5.5" lengthAdjust="spacingAndGlyphs" >S</text>
<g class="c"><rect x="596" y="370" width="14" height="1" fill="#E01010"/><rect x="596" y="384" width="14" height="1" fill="#1010E8"/></g>
<text x="406" y="555.5" font-size="12.5" fill="#000" textLength="31.5" lengthAdjust="spacingAndGlyphs" >-0,057</text>
<text x="451.7" y="555.5" font-size="12.5" fill="#000" textLength="31.05" lengthAdjust="spacingAndGlyphs" >-0,028</text>
<text x="498.5" y="555.5" font-size="12.5" fill="#000" textLength="5.0" lengthAdjust="spacingAndGlyphs" >0</text>
<text x="543" y="555.5" font-size="12.5" fill="#000" textLength="26" lengthAdjust="spacingAndGlyphs" >0,028</text>
<text x="586.3" y="555.5" font-size="12.5" fill="#000" textLength="25.7" lengthAdjust="spacingAndGlyphs" >0,057</text>
<text x="699" y="346.6" font-size="12.5" fill="#000" textLength="65.4" lengthAdjust="spacingAndGlyphs" >DISTORTION</text>
<text x="632.8" y="364" font-size="12.5" fill="#000" textLength="59.2" lengthAdjust="spacingAndGlyphs" >(Pincushion)</text>
<text x="725" y="364" font-size="12.5" fill="#000" textLength="51" lengthAdjust="spacingAndGlyphs" >100% Field</text>
<g class="c" fill="none" stroke="#000"><rect x="724.6" y="370" width="1.7" height="170" fill="#000" stroke="none" shape-rendering="auto"/><path d="M633 540.5H797M633.5 537V541M722 370.5H729M722 456.5H729"/></g>
<path class="c" d="M633 371v1h1v-1zM634 372v1h1v-1zM635 373v1h1v-1zM636 374v1h1v-1zM637 375v1h1v-1zM638 376v1h1v-1zM639 377v1h1v-1zM640 378v1h1v-1zM641 379v1h1v-1zM642 380v1h1v-1zM643 381v1h1v-1zM644 382v1h1v-1zM645 383v1h1v-1zM646 384v1h1v-1zM647 385v1h1v-1zM648 386v1h1v-1zM649 387v1h1v-1zM650 388v1h1v-1zM651 389v1h1v-1zM652 390v1h1v-1zM653 391v1h1v-1zM654 392v1h1v-1zM655 393v1h1v-1zM656 394v1h1v-1zM657 395v1h1v-1zM658 396v1h1v-1zM659 397v1h1v-1zM660 398v1h1v-1zM661 399v1h1v-1zM662 400v2h1v-2zM663 402v1h1v-1zM664 403v1h1v-1zM665 404v1h1v-1zM666 405v1h1v-1zM667 406v1h1v-1zM668 407v1h1v-1zM669 408v2h1v-2zM670 410v1h1v-1zM671 411v1h1v-1zM672 412v1h1v-1zM673 413v1h1v-1zM674 414v1h1v-1zM675 415v2h1v-2zM676 417v1h1v-1zM677 418v1h1v-1zM678 419v1h1v-1zM679 420v2h1v-2zM680 422v1h1v-1zM681 423v1h1v-1zM682 424v2h1v-2zM683 426v1h1v-1zM684 427v2h1v-2zM685 429v1h1v-1zM686 430v1h1v-1zM687 431v2h1v-2zM688 433v1h1v-1zM689 434v2h1v-2zM690 436v1h1v-1zM691 437v2h1v-2zM692 439v1h1v-1zM693 440v2h1v-2zM694 442v1h1v-1zM695 443v2h1v-2zM696 445v2h1v-2zM697 447v1h1v-1zM698 448v2h1v-2zM699 450v2h1v-2zM700 452v2h1v-2zM701 454v1h1v-1zM702 455v2h1v-2zM703 457v2h1v-2zM704 459v2h1v-2zM705 461v2h1v-2zM706 463v2h1v-2zM707 465v2h1v-2zM708 467v2h1v-2zM709 469v2h1v-2zM710 471v2h1v-2zM711 473v3h1v-3zM712 476v2h1v-2zM713 478v3h1v-3zM714 481v3h1v-3zM715 484v2h1v-2zM716 486v3h1v-3zM717 489v3h1v-3zM718 492v4h1v-4zM719 496v3h1v-3zM720 499v4h1v-4zM721 503v4h1v-4zM722 507v6h1v-6zM723 513v6h1v-6zM724 519v9h1v-9zM725 528v13h1v-13z" fill="#E01010"/>
<text x="634" y="552.8" font-size="12.5" fill="#000" textLength="34.8" lengthAdjust="spacingAndGlyphs" >0,000%</text>
<text x="728.8" y="552.8" font-size="12.5" fill="#000" textLength="5.2" lengthAdjust="spacingAndGlyphs" >0</text>
<text x="792.8" y="552.8" font-size="12.5" fill="#000" textLength="5.2" lengthAdjust="spacingAndGlyphs" >0</text>
</svg></body></html>
